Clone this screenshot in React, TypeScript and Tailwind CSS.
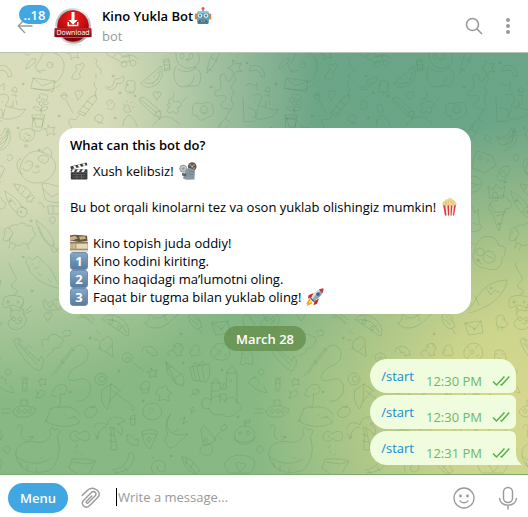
import React from "react";

type IconProps = { children: React.ReactNode; label: string; className?: string };

function Emoji({ children, label, className = "" }: IconProps) {
  return (
    <svg
      role="img"
      aria-label={label}
      viewBox="0 0 18 18"
      className={"inline-block h-[18px] w-[18px] shrink-0 " + className}
    >
      {children}
    </svg>
  );
}

function Robot() {
  return (
    <Emoji label="robot">
      <circle cx="9" cy="1.6" r="1.5" fill="#e2574c" />
      <rect x="8.2" y="2.5" width="1.6" height="2" fill="#7b9aa3" />
      <rect x="0.8" y="6.5" width="2.4" height="6" rx="1" fill="#e0803f" />
      <rect x="14.8" y="6.5" width="2.4" height="6" rx="1" fill="#e0803f" />
      <path d="M4 4h10l1.5 4.5-1 8H3.500l-1-8z" fill="#5fa6b3" />
      <path d="M4 4h10l.7 2H3.300z" fill="#8cc8d0" />
      <path d="M3.500 14h11l-.5 3H4z" fill="#4b7f8d" />
      <circle cx="6" cy="8.600" r="2.200" fill="#eefaff" />
      <circle cx="12" cy="8.600" r="2.200" fill="#eefaff" />
      <circle cx="6" cy="8.600" r="1.200" fill="#3583b3" />
      <circle cx="12" cy="8.600" r="1.200" fill="#3583b3" />
      <path d="M9 9.500l1 2H8z" fill="#d25045" />
      <rect x="5.500" y="12.800" width="7" height="2.200" rx=".5" fill="#344c59" />
      <path d="M7.200 13v2M9 13v2M10.800 13v2" stroke="#d8eef2" strokeWidth=".7" />
    </Emoji>
  );
}

function Clapper() {
  return (
    <Emoji label="clapper board">
      <path d="M.3 4.500L16.600.6l.8 2.700L1 7.300z" fill="#38393b" />
      <path d="M3 3.900l2.200-.5 1.400 2.400-2.300.6zM7.500 2.800l2.300-.5 1.400 2.400-2.300.5zM12.200 1.700l2.200-.5 1.500 2.300-2.300.6z" fill="#f3f3f3" />
      <rect x=".8" y="7.200" width="16.600" height="10.400" rx=".8" fill="#37383a" />
      <path d="M3 7.200h2.500L3.800 10H1.200zM8 7.200h2.500L8.800 10H6.200zM13 7.200h2.500L13.800 10h-2.600z" fill="#f3f3f3" />
      <path d="M1 10.400h16.200M2.500 12.600h13M2.500 15h13M7 12.600V17M11.500 12.600V17" stroke="#77797b" strokeWidth=".6" />
    </Emoji>
  );
}

function Projector() {
  return (
    <Emoji label="film projector">
      <circle cx="4.200" cy="6.700" r="3.500" fill="#d8dadb" stroke="#818384" strokeWidth=".8" />
      <path d="M4.200 3.500v6.400M1 6.700h6.400M2 4.400l4.500 4.600M6.500 4.400L2 9" stroke="#8d8f90" strokeWidth=".6" />
      <circle cx="13.200" cy="4.600" r="4.300" fill="#5c5653" />
      <circle cx="13.200" cy="4.600" r="1" fill="#c9bcae" />
      <circle cx="11.500" cy="3" r="1" fill="#a28f80" />
      <circle cx="15" cy="3" r="1" fill="#a28f80" />
      <circle cx="15" cy="6.300" r="1" fill="#a28f80" />
      <path d="M7 7.500l3-1.700 6 2.200-.5 9.500-8 .3L4 16.500l1-3.800z" fill="#8798a2" />
      <path d="M3 11l4.500.8-.3 2.700L3 13.400z" fill="#56626a" />
      <path d="M10 9l5 1M9.500 12l5 .5" stroke="#6c7d88" strokeWidth=".8" />
    </Emoji>
  );
}

function Popcorn() {
  return (
    <Emoji label="popcorn">
      <path d="M2 6.500h13l-2 11H4z" fill="#f7efec" />
      <path d="M2 6.500h2.200l1.300 11H4zM6.300 6.500h1.800v11H7zM9.800 6.500h1.700l-1 11H9.500zM13.100 6.500H15l-2 11h-1z" fill="#d93a3a" />
      <g fill="#f2d88d" stroke="#c6a052" strokeWidth=".3">
        <circle cx="3.500" cy="5.500" r="1.900" />
        <circle cx="6" cy="3.500" r="1.900" />
        <circle cx="9" cy="2.200" r="1.900" />
        <circle cx="11.500" cy="3.700" r="1.900" />
        <circle cx="13.500" cy="5.700" r="1.800" />
        <circle cx="6.500" cy="6" r="1.700" />
        <circle cx="10" cy="6" r="1.700" />
      </g>
    </Emoji>
  );
}

function Reel() {
  return (
    <Emoji label="film frames">
      <rect x="0" y="7.500" width="18" height="10" fill="#cfbf9b" />
      <path d="M0 8h18v1.500H0zM0 14.800h18v1H0z" fill="#8e7c5c" />
      <path d="M0 16.500h18v1H0z" fill="#ebe1c6" />
      <rect x="7" y="10" width="10" height="4.500" fill="#e6d8b7" />
      <path d="M0 1.500l4-.7 8 .5 5 .5.500 5.200L9 8 0 6.500z" fill="#65563e" />
      <path d="M0 3l5-1.200 3 2.400L3 6.300 0 6zM9 2.500l6-.3 1 2.500-6 1z" fill="#c8b183" />
      <path d="M2 9.500v5M5.500 9.500v5" stroke="#a8956d" strokeWidth=".7" />
    </Emoji>
  );
}

function Keycap({ digit }: { digit: string }) {
  return (
    <span className="flex h-[18px] w-[18px] shrink-0 items-center justify-center rounded-[3px] border border-[#6b8fb2] bg-linear-to-b from-[#85a7c7] to-[#587b9e] text-[13px] leading-none font-bold text-white">
      {digit}
    </span>
  );
}

function Rocket() {
  return (
    <Emoji label="rocket">
      <path d="M3.500 10.500L0 16l1.500-.4L.8 18l5.700-2.700z" fill="#f39a25" />
      <path d="M4.500 11.500L2 15.800l4-1.800z" fill="#ffe15a" />
      <path d="M7.500 5L2.500 7.300 2 10.500l3.500-.7zM13 10.500l-2 5.300-3.300 1.400L8.300 13z" fill="#c9302f" />
      <path d="M17.500.5c-5 .2-8.800 3-12.400 9.500l3 3C14.500 9.300 17.400 5.400 17.500.5z" fill="#98a8b4" />
      <path d="M17.500.5c-5 .2-8.800 3-12.400 9.500l1.200 1.200C9.500 6.500 13 3 17.500.5z" fill="#dbe3e9" />
      <path d="M17.500.5c-1.800.1-3.300.4-4.700 1.100l3.500 3.600c.8-1.500 1.100-3 1.200-4.700z" fill="#cb3835" />
      <circle cx="12" cy="6.200" r="1.600" fill="#2d5f93" stroke="#66798a" strokeWidth=".7" />
      <path d="M5 9.500l3.600 3.600-1.200.9-3.300-3.300z" fill="#58646f" />
    </Emoji>
  );
}

function Avatar() {
  return (
    <svg role="img" aria-label="Kino Yukla Bot" viewBox="0 0 40 40" className="h-10 w-10 shrink-0">
      <defs>
        <radialGradient id="red" cx=".5" cy=".2" r=".8">
          <stop offset="0" stopColor="#f0201c" />
          <stop offset=".55" stopColor="#c80b10" />
          <stop offset="1" stopColor="#780308" />
        </radialGradient>
        <linearGradient id="rim" x1="0" y1="0" x2="1" y2="1">
          <stop offset="0" stopColor="#9a9a9a" />
          <stop offset=".4" stopColor="#f0f0f0" />
          <stop offset="1" stopColor="#888" />
        </linearGradient>
        <linearGradient id="band" x1="0" y1="0" x2="0" y2="1">
          <stop offset="0" stopColor="#c0272b" />
          <stop offset="1" stopColor="#7f0a10" />
        </linearGradient>
      </defs>
      <ellipse cx="20" cy="38.800" rx="9" ry="1" fill="#ececec" />
      <circle cx="20" cy="20" r="17.800" fill="url(#rim)" />
      <circle cx="20" cy="20" r="15.500" fill="url(#red)" stroke="#8d1518" strokeWidth=".6" />
      <path d="M18.500 6h3v8h3.300L20 18.800 15.200 14h3.300z" fill="#fff" />
      <path d="M14.500 16v4.200h11V16h-1.500v2.700h-8V16z" fill="#fff" />
      <path d="M2 22l-1 8.500 2 1h34l2-1-1-8.500z" fill="#b5b0b0" />
      <rect x="1.500" y="22" width="37" height="9" rx="1" fill="url(#band)" />
      <text x="20" y="29" textAnchor="middle" fill="#fff" fontSize="7" fontFamily="Open Sans, sans-serif">
        Download
      </text>
    </svg>
  );
}

/* Line drawings of the wallpaper, on a tile 253 wide and 422 high. */
const upperDoodles: string[] = [
  "M27 15c2-4 5-7 9-6l-1 4c-4 1-5 5-9 6zM32 0l4-1M25 3c0 2 3 3 5 1",
  "M44 2l-1-5 4 3 5-1 2 4c9 2 12 11 9 19-1 4-4 9-9 11M44 2c-3 4-3 8-7 12-3 3-1 6 3 7l6-1M31 38l2-10 22 3-2 10zM33 28l9 8 13-5M33 38c8 3 22 3 28-4",
  "M50 12a3 3 0 1 0 .1 0M52 14v1M37 21l4 2",
  "M72-2l3 4 4-1-2 4 2 3-5-1-3 3v-5l-4-2 4-2z",
  "M72 27l5-8c-3-3 0-6 3-4 1-3 5-2 4 1l-5 8c3 3 0 6-3 5-2 2-5 0-4-2z",
  "M94 8c6 2-1 6 4 9s2 5 3 7M95 32c-3 4 3 5 1 9s1 4 0 6M96 28v-4",
  "M106 3c4 6 12 5 16 10l8-2-1-6M106 3l-4-6M113 7l5-5 6 5 5-1M124 11a3 3 0 1 0 .1 0M133 10a3 3 0 1 0 .1 0M121 8c5-5 12-4 17 1",
  "M106 36c4 4 8-1 8-5s6 0 9-5M106 38c6 5 11-1 11-5 4 2 8-2 7-6",
  "M128 35c-4-2 0-6 3-4 5-1 5 4 3 5 3 4 0 7-4 6-5 1-7-4-2-7M127 34l-2 1M130 42v2M133 42v2",
  "M141 33l20-17c4 9-1 19-10 21-4 1-9-1-10-4zM144 32c7 5 17-2 16-12M149 29v1M154 26v1M153 33v1M157 29v1M158 22v1",
  "M164 12l5-1 1 7-5 1zM164 12l-1-2 6-1v2M165 19l-1 2 6-1v-2M164 15h6",
  "M176 4c-3-3 1-8 4-5 4-4 12-4 15 0 4-3 7 2 3 5 4 7-1 13-7 14-9 2-16-6-15-14M182 3a2 3 0 1 0 .1 0M191 3a2 3 0 1 0 .1 0M186 9h3l-1 2zM176 16c-4 8-2 16 3 20 9 3 14-2 15-10M194 17c8 2 9 14 3 19h-10M178 19c6 4 13 3 18-1",
  "M217-2c-6 6-9 15-10 25 7-7 11-14 13-23M208 19l4 2M212 8l5 3",
  "M233 10l3 4 5-1-2 5 3 4-5-1-3 4-2-5-4-2 4-3z",
  "M250 17c3-3 10-2 12 2 3 3 2 5 3 7l-4 1c0-3-2-6-5-7l-6 1z",
  "M0 45c7-3 10 2 8 6l-3 5c8 2 11 2 15 4l6-1-6 7c-8 3-13 5-20 1M-7 36l3-3 5 3 3-3v7M2 52h1M5 59l-2 7M-10 48l1 24 11-1M-6 57l8 3 1 7",
  "M12 40c1-4 5-3 5 0v2h-3v-1h-2zM12 45h4v2M13 51v5h-2M16 50l1 5",
  "M40 48c-3-4 2-6 4-3 4-1 5 3 2 5 4 2 2 6-2 4-3 3-6 1-4-2-5 1-5-5 0-4M43 49a2 2 0 1 0 .1 0M42 56l-1 8M41 61c-6 0-8-4-8-4 3-1 7 0 8 4 0-4 4-5 7-4-1 3-3 4-6 4M32 65h13l-1 3H33zM34 68l2 9h6l2-9",
  "M64 43a3 3 0 1 0 .1 0M61 46l6-1M66 50l7 13",
  "M76 45c-3-4 2-6 3-3 2-3 6 0 3 3l-4 5z",
  "M91 47l4-2 2 4-13 17-6-3zM80 61l6 3M83 56l6 4M87 51l6 4M79 65c-4 10-9 0-10 6s4 4 3 8",
  "M109 56c-4-2-2-6 1-6s6 4 4 7-6 3-7 1M111 53h1",
  "M125 56c2-3 6 0 4 3 3 1 2 4-1 3-4 1-5-3-3-6M123 54l1 1M127 51v1M131 53l1-1M134 57h-1",
  "M140 48l4-1 16 14 1 6-6-1-15-14zM141 50l16 13M155 66l1-4 5-1",
  "M154 46c-3-3 2-6 3-3 2-3 6 0 3 3l-3 4z",
  "M170 54c-4-5 2-8 4-2 4-2 9 1 7 4l-4 2c4 4-1 8-4 3-4 5-8-1-3-4-4-1-4-4 0-3M173 48l1-5M183 51l4-4",
  "M193 60c-3-5 4-9 9-6 6-5 12 0 11 5 2 5-1 8-6 8-5 6-10 2-9-1-7 0-7-5-5-6M204 56a4 4 0 1 0 .1 0M202 59v1M206 59v1M202 62c1 1 3 1 4 0",
  "M221 25c7-4 3 4 7 6s2-6 6-5c3 0 1 7-2 9-2 3 1 5 2 8M221 25c-3 5 1 8 0 12-2 7-8 1-6 8 3 3 9-2 11 2 1 5-6 4-5 9 3 5 10 0 8 6-1 3-3 4-3 7M234 43c-3 3-4 8-1 10 2 3-3 5-2 8M224 70c-4 3-5 7-4 10M225 69l5 3",
  "M124 70l4-5c4 1 7 5 9 11M124 70l-1 6M153 76c4-8 11-11 19-8l8 6M160 70l-2-3",
  "M95 68a4 4 0 1 1 7 3c-1 2-4 2-4 0-3 1-4-2-3-3M98 73h5",
  "M33 68v3M33 69l-1 10c3 3 9 3 10 0l1-9z",
  "M48 75l3 3 4-1-2 4 2 4-5-2-3 3v-5l-3-2 4-1z",
  "M22 80c7-4 15 0 12 7s-13 5-14 0 0-6 2-7M25 84c2-2 3 0 3 2 2-2 4 0 2 2l-3 3-3-4M26 95a2 1 0 1 0 .1 0",
  "M0 98c5-2 8-10 7-17l3 1c2 10-3 17-12 19M8 78l2 3M-2 95l9-10",
  "M7 106c2-3 7-1 5 3-2 4-6 1-4-1",
  "M22 112c5-12 17-13 24-8 10 4 12 13 7 20-8 13-27 11-32 0-2-4-1-8 1-12M42 103c2-9 12-6 9 4M21 109c-7 0-4 16 2 15M25 113c4-5 10-1 7 4s-9 5-9 1M38 108c3-5 13-3 10 3-2 4-9 2-10-3M30 115h1M42 110h1M36 116h3l-1 2zM33 122c3 2 6 1 7-2",
  "M14 134c8 0 14 4 17 9l-4 5c-7-2-10-8-13-14M20 136l-2 4M25 139l-3 5M28 147c-3 4-1 6 1 4l3 1v-3l3-1-3-3-4 2",
  "M5 141c6 4 14 9 17 16l4 2M5 141c1 10 7 19 12 22M10 148l6 7M22 157a5 5 0 1 0 .1 0M21 161a1 1 0 1 0 .1 0",
  "M42 134l4-1 14 4M42 134l3 15c6 4 11 4 17 3M43 139l9 8 9-5",
  "M38 153c6-3 3 5 7 4M48 156h12v8H49zM53 156v7",
  "M9 178c-5-2-6 5-4 7-5 6 1 8 5 4l3-6-4-5c3-5 8-2 9-3 4-5 9 0 9 1 5-2 7 3 6 5 6 4 0 7-2 9 0 6-6 4-8 3-3 5-8 2-10 0-4 1-4-3-3-5M6 182h1M10 194l-1 4M15 196l-2 4M27 195l2 4",
  "M36 170c7 5 18 15 18 25l-3 2c-7-5-13-16-15-27M39 177c3 8 6 14 12 18M53 195l5 7M52 198c-2 4 4 6 5 2s5-1 3-5",
  "M50 171c-3-5 7-6 5 0-2 5-5 2-4 0",
  "M29 217c-4-2-4-8 0-10l3 3 6-4 4 5c7 4 12 13 14 19 3 6 5 6 6 9-14-3-22-7-28-13-3-3-6-6-5-9M32 214h1M39 212h1M34 219l5-2M48 229l3 3M38 223l4 3",
  "M14 244c6 0 3-5-1-6-4-2 1-5 3-8s-5-8-7-17M5 247c6-3 12-1 17 0 4 6 0 13-4 10-5-3-7-2-13 1-3-1-3-8 0-11M8 250v4M6 252h4M18 251a1 1 0 1 0 .1 0",
  "M44 250c-2 4 0 8 4 11l12-2c3-4-1-10-4-10l-7 4zM46 253l4 5 3-5 4 5",
  "M220 74c-3 4-5 9-9 12M227 76c-4 4-3 9-10 13l-6-3M217 79l7 4",
  "M232 86c4-2 8 3 4 5-5 2-7-4-3-3M232 88h1",
  "M244 87c6 2 12-1 14-9l3 2c2 7-4 15-11 15-6 0-5-7-6-8M246 89c7 2 12-2 14-8",
  "M225 101l14 5 4 9-11 8-13-5 2-11zM227 106a2 2 0 1 0 .1 0M234 112c-1-3 2-3 2-1",
  "M247 119c-4 7-4 12 2 12 6-2 5-7 9-12l-3-3c-3 0-5 1-8 3M250 121a3 3 0 1 0 .1 0",
  "M214 127c8-3 14 1 15 7-1 6-9 10-15 8M215 133l12 2M217 138l6-2",
  "M235 136l5 4 3-6 4 5 5-3-2 12h-13zM242 142a3 3 0 1 0 .1 0",
  "M241 160c-7-5-3-11 3-9 2-9 12-5 11 0 6 0 5 9-3 8l-6 22-8-20c-5-2-3-7 0-8M241 162h12M243 166l8-2",
  "M214 161l5-5 3 7 3-4 1 13 3 5c-2 5-10 5-15 4M216 169h2M220 173l6 2",
  "M223 195c3-9 15-12 21-4l2 5c8-2 8 8 3 12 1 11-9 14-17 10-11-1-14-10-11-16zM227 198a4 4 0 1 0 .1 0M236 201a6 6 0 1 0 .1 0M233 205l6 3M222 209l7 5M221 194l-4-2 1 6",
  "M216 260c11-18 17-29 38-30-2 17-21 29-38 33M233 238l5 7 4-5 5 3M222 246l4 9M217 253l-4 7",
  "M243 270c-1-4 5-7 8-3l1 4 3 2c-1 6-8 5-11 3zM249 269h1M245 277v3M249 277v3",
];

const lowerDoodles: string[] = [
  "M12 318c-5-6 3-10 7-7l5-2-1 5c5 3 4 11-2 14-6 4-14 0-13-6zM14 317a2 2 0 1 0 .1 0M20 317a2 2 0 1 0 .1 0M16 323c3 2 5 0 5-2M11 312l-1-5 3 3M20 309l2-5M26 311l6-6M24 314l7-3",
  "M45 317c-3-4 2-6 3-3 2-3 6 0 3 3l-3 4z",
  "M78 318c6-2 9 0 14 6M80 315c5 0 9 3 13 8M84 313c5 1 8 4 11 7M78 311l8-3",
  "M103 318c6-5 14-3 20 2 5 4 7 10 5 16l-3-1-22-15zM105 320c9-2 18 3 21 13M111 320a2 2 0 1 0 .1 0M119 326a2 2 0 1 0 .1 0M112 317l1 4M125 324l-3 3",
  "M145 323c5-2 5-7 3-12 4 7 11 9 15 5 6-3 10-3 13-8 6-1 6 6 1 7-5 6-14 14-23 13-4 0-7-2-9-5M153 319h1M164 315l3 6",
  "M189 317c-1-5 8-4 10 1l3 9-5 2c-6-3-8-7-8-12M191 319l7 6M199 329l3 5M193 316l7 6",
  "M212 323l16-2 2 12-14 2zM212 323l10 6 6-8M220 329c1-2 3 0 1 2",
  "M14 341c3-6 6 0 6 3l19 17 2-5c4 4 3 9-2 15-10-4-20-17-25-30M17 343l20 21M18 338l4 3M25 350l4-5 3 3",
  "M43 346c-4-5 2-9 5-6 0-6 8-8 11-3 5-1 5 5 2 7 0 5-5 3-8 5 0 5-6 5-6 8M63 333a4 3 0 1 1 4 3h-3",
  "M51 376l21-28M55 374l20-27c7-5 14 1 13 9-1 9-12 9-17 15-6 9-2 11 6 9 10-4 15 3 13 12-2 6-7 10-13 9M61 360l3 4M71 348l3 3",
  "M104 339c5-6 10 1 8 6l1 12-7-5-5-2c-3-6-1-10 3-11M106 351l5-5M96 331l4 3M95 340h3M98 349l2-1",
  "M142 352l1-4c8-4 14 0 14 7l-5 1c-1-4-2-4-5-3M146 349l2 3",
  "M170 356c-5-2-1-7 3-5 0-6 3-9 8-7 3 3 3 6-1 8l2 3-5 1-2-4M174 345l2 3M180 344l1 4",
  "M190 353c-1-3 1-4 2-2-2-8 9-8 7 0 3 4-1 6-4 4-3 2-5 0-5-2",
  "M211 351c2-9 15-11 18-2 3 8-3 12-9 11-8-1-10-4-9-9M219 350a2 2 0 1 0 .1 0M214 347l2 1M224 346l-1 2M224 356l2-1M215 357l1-2",
  "M240 363c4-6-1-13 6-13s8 8 6 15l-6-2-3 2zM243 354h1M249 354h1M245 358c1 1 2 1 3 0",
  "M127 363c-7-2-6-11 1-10 7 1 6 11-1 9-5-3 1-7 3-4s-2 4-2 1M133 363l11 8",
  "M151 368l2 3 4-1-2 4 2 3-4-1-3 2v-4l-3-2 4-1z",
  "M166 362l12 10c6 2 7 9 5 14l-6-2zM166 362l1 10 9 12M167 369l5-3M173 380c3-4 7-4 9-6",
  "M190 367l19-3c2 9 0 17-4 18l-12-2zM193 367l3 14M197 366l3 15M202 365l2 15M193 365l2-3 4 3 3-4 3 4",
  "M6 384c1-7-8-9-10-2M-5 383l11 8 8 2-3-7M2 377h1",
  "M23 380l4-1v10h-4zM22 378h6M23 383h4M22 391h5",
  "M41 378l2 2 3-1-1 3 1 3-3-1-3 2v-3l-2-2 3-1z",
  "M36 398c3-9 7-9 9-6 0 4-6 6-9 6M38 394l-2-4",
  "M52 394c1-6 8-12 13-9 5 6 0 10-5 9 1 8 0 11-2 14 9-3 19 0 22 7M51 395l6 2M60 389h1",
  "M101 373a6 6 0 1 0 .1 0M102 376a3 3 0 1 0 .1 0",
  "M102 390l9-6 10 7M102 390c-2 7 0 15 5 19l3-8 9-10M113 391l21 16c2 5-4 4-3 0M111 384l-1 17",
  "M140 388c0-6 3-2 4-6 5-3 7 3 5 6-3 2-6 2-9 0M141 389l1 4h6l1-5",
  "M157 390c2-4 6-1 7-4 4-1 3 3 4 5l4 2-4 3 1 5-5-2-5 2 1-5-4-2z",
  "M192 391c2-3 6-2 8 1l-4 3c-3 0-4-2-4-4M190 396l9-6",
  "M211 403l1-20 4-5 4 6v5h6l1-17 5-7 5 8v30M211 383h9M222 389l2-6 3 4M227 373h9M211 391h9M220 403v-9h6v9M231 379v3",
  "M202 405c-2-7 5-9 8-5 4-6 12-5 14 1 6-6 12-4 13 2 5 0 6 7 0 9-5 6-11 6-15 2-7 3-12-1-13-6-5 2-6 0-7-3",
  "M13 411c3-5 9-6 15-5l8 3c-1 5-7 9-14 8-5 0-9-2-9-6M19 409a2 2 0 1 0 .1 0M25 409a2 2 0 1 0 .1 0M30 409a2 2 0 1 0 .1 0M21 405v-5h6v5M2 409h8M2 413h8",
  "M51 408l-5 13c8 6 24 8 34 1l-7-6M47 420l-3 2M65 415h1M69 418l6-1M51 409l7-3",
  "M87 409c4-4 9-3 10 1 0 7-8 10-12 5-1-3 0-5 2-6M90 406l3 2 2-3",
  "M152 403c8 0 11 7 9 12-4 7-17 6-18-2-1-6 4-10 9-10M150 408v1M153 409v1M150 412v1",
  "M16 456c-2-12 11-16 20-14 11 2 13-5 15-7-3-6 1-10 4-5 5-3 6 3 2 7 4 10 3 24-7 33-12 5-31 3-34-14M17 457c9 7 22 9 33 2M20 462l2 5M27 466v5M36 468l1 4M41 458h1",
  "M17 428c1-5 6-4 5 0l-1 8 4 4M28 440c5 1 2-5 0-4",
  "M70 438c0-7 6-9 9-4 8-6 12-1 10 5-4 4-8 1-9-1-3 5-8 4-10 0M75 435l2 3",
  "M94 428c2-7 9-6 13-3 2-11 14-9 18-4l-8 3c7 2 6 9 4 11-3-4-6-7-11-8 3 9 0 13 1 23h6c0-7-3-14-4-22M107 427c-6 0-9 5-9 10l-4-3M109 434l5 2M110 441l5 1",
  "M127 435c4-1 6 1 8 5l3-1v7l-5-1c-5-1-7-5-6-10M130 438h1M131 416l4-1v10h-4zM130 419h5",
  "M142 432c5-3 11-3 16 0l-8 17c-6-3-7-11-8-17M143 435c6-2 10-2 14 0M149 437a2 2 0 1 0 .1 0M148 443h1",
  "M171 414c-7 10-4 19 7 21l10-1-11 10c-5 7-10 3-10 0-4-3-1-9 1-9-3-6-3-16 3-21M180 420l5-3-2 7 5-3M189 410l4-3-2 6 5-3M174 431c2 1 3 0 4-2",
  "M203 443l-2-12c1-5 3-7 5-3l10 12-10 6zM214 439l8-9M218 436l4 4M221 427l4-3 2 4-4 3zM200 450c1-6 10-8 12-4 2 7-2 10-6 9-5-1-7-3-6-5M206 438a2 2 0 1 0 .1 0",
  "M235 438c-2-8 4-12 10-12 7 0 11 6 9 12-2 8-16 9-19 0M233 438c4 6 18 6 23-1M245 421v5M245 421l5-1v3h-5M240 432a2 1 0 1 0 .1 0M248 431a2 2 0 1 0 .1 0",
  "M69 468l3-9h16l8 2-7 12M69 468l8 6M73 462l14 2 7-2M76 451l2 2M81 455l2-1M76 448l1-3",
  "M112 470c10-1 16-7 17-17 3-1 5 1 5 4-1 11-9 15-20 16M115 471l3 2M124 467l3 4",
  "M153 473c-5-10 3-14 9-12 5 3 5 10 0 11-5 0-6-5-3-7M154 459l-2-3",
  "M182 457c7 0 14 6 18 14l-4 3c-9-3-12-8-14-17M185 461l11 12M187 458l-1 6M193 463l-2 5",
  "M225 463c4-9 20-11 29-3 2 6-2 11-4 13h-21c-3-3-5-7-4-10M237 467c-3-5 3-6 4-3 2-3 6 0 3 4l-4 4z",
  "M4 451c-3-5 5-7 6-2 1 4-6 6-5 2M8 369a3 3 0 1 0 .1 0",
];

const dots: [number, number][] = [
  [23, 31], [59, 63], [113, 23], [120, 40], [135, 43], [211, 34], [247, 10], [18, 75], [115, 65],
  [10, 148], [39, 97], [31, 168], [23, 204], [32, 238], [252, 129], [246, 171], [225, 207],
  [238, 235], [90, 285], [181, 281], [119, 318], [183, 310], [222, 317], [70, 339], [143, 348],
  [238, 364], [97, 385], [171, 403], [32, 384],
];

function Wallpaper() {
  return (
    <div
      aria-hidden="true"
      className="absolute inset-0 -z-10 bg-[#88b884] bg-[radial-gradient(ellipse_60%_75%_at_0%_8%,#dbddbb_0%,#dbddbbf2_35%,#dbddbb00_100%),radial-gradient(ellipse_52%_68%_at_100%_84%,#d5d88d_0%,#d5d88de6_30%,#d5d88d00_100%),radial-gradient(ellipse_90%_75%_at_85%_4%,#6ba587_0%,#6ba587f2_45%,#6ba58700_100%)]"
    >
      <svg className="h-full w-full" fill="none">
        <defs>
          <g id="doodles">
            <g transform="translate(0 -3)">
              {upperDoodles.map((d) => (
                <path key={d} d={d} />
              ))}
            </g>
            <g transform="translate(0 -53)">
              {lowerDoodles.map((d) => (
                <path key={d} d={d} />
              ))}
            </g>
            {dots.map(([x, y]) => (
              <circle key={x + "-" + y} cx={x} cy={y} r="1" />
            ))}
          </g>
          <pattern id="wallpaper" width="253" height="422" patternUnits="userSpaceOnUse">
            <g stroke="#3f7a45" strokeOpacity=".25" strokeWidth=".8" strokeLinecap="round" strokeLinejoin="round">
              <use href="#doodles" />
              <use href="#doodles" x="-253" />
              <use href="#doodles" x="253" />
            </g>
          </pattern>
        </defs>
        <rect width="100%" height="100%" fill="url(#wallpaper)" />
      </svg>
    </div>
  );
}

function Checks() {
  return (
    <svg role="img" aria-label="Read" viewBox="0 0 18 12" className="h-3 w-[18px] shrink-0" fill="none" stroke="#55b24a" strokeWidth="1.500">
      <path d="M1 6.500l3.500 3.500L12.500 1.500M8.500 9l1.200 1L17.300 1.500" />
    </svg>
  );
}

function Message({ time, shape, tail }: { time: string; shape: string; tail?: boolean }) {
  return (
    <li className={"relative flex h-[34px] items-start bg-[#effdde] pr-[6px] pl-[11px] " + shape}>
      <a href="#start" className="pt-[8px] text-[#168acd]">/start</a>
      <time className="pt-[13px] pl-3 text-[#6cb866]">{time}</time>
      <span className="pt-4 pl-[10px]">
        <Checks />
      </span>
      {tail && (
        <svg aria-hidden="true" viewBox="0 0 6 12" className="absolute bottom-0 left-full h-3 w-[6px]">
          <path d="M0 0c0 5 2 9 6 12H0z" fill="#effdde" />
        </svg>
      )}
    </li>
  );
}

export default function App() {
  return (
    <div className="flex min-h-screen flex-col bg-white font-['Open_Sans','Noto_Sans',sans-serif] text-[13px] leading-[18px] text-black">
      <header className="flex h-[53px] items-center border-b border-[#b9c4ae] pr-4 pl-[17px]">
        <button type="button" aria-label="Back, 18 unread" className="relative h-10 w-[36px] shrink-0">
          <svg viewBox="0 0 16 16" className="absolute top-[12px] left-0 h-4 w-4" fill="none" stroke="#999" strokeWidth="1.300">
            <path d="M15.500 8H1.500M8 1L1.300 8 8 15" />
          </svg>
          <span className="absolute -top-px left-[2px] flex h-[19px] w-[31px] items-center justify-center rounded-full bg-[#40a7e3] text-[13px] font-semibold text-white">
            ..18
          </span>
        </button>
        <Avatar />
        <div className="flex min-w-0 flex-1 flex-col gap-[2px] pl-[9px]">
          <h1 className="flex items-center gap-px font-semibold">
            Kino Yukla Bot
            <Robot />
          </h1>
          <p className="text-[#999]">bot</p>
        </div>
        <button type="button" aria-label="Search" className="mr-[21px]">
          <svg viewBox="0 0 18 18" className="h-[18px] w-[18px]" fill="none" stroke="#999" strokeWidth="1.600">
            <circle cx="7.500" cy="7.500" r="6" />
            <path d="M11.800 11.800L17 17" />
          </svg>
        </button>
        <button type="button" aria-label="More" className="flex w-2 flex-col items-center gap-[2px]">
          <span className="h-1 w-1 rounded-full bg-[#999]" />
          <span className="h-1 w-1 rounded-full bg-[#999]" />
          <span className="h-1 w-1 rounded-full bg-[#999]" />
        </button>
      </header>

      <main className="relative isolate flex flex-1 flex-col items-center justify-end border-b border-[#7fa873] pb-[9px] pl-[2px]">
        <Wallpaper />
        <section className="w-fit rounded-2xl bg-white py-[8px] pr-3 pl-[11px]">
          <h2 className="pb-[8px] font-semibold">What can this bot do?</h2>
          <p className="flex gap-[5px]"><Clapper />Xush kelibsiz! <Projector /></p>
          <p className="flex gap-[5px] py-[18px]">
            Bu bot orqali kinolarni tez va oson yuklab olishingiz mumkin! <Popcorn />
          </p>
          <p className="flex gap-[5px]"><Reel />Kino topish juda oddiy!</p>
          <ol>
            <li className="flex gap-[5px]"><Keycap digit="1" />Kino kodini kiriting.</li>
            <li className="flex gap-[5px]"><Keycap digit="2" />Kino haqidagi ma’lumotni oling.</li>
            <li className="flex gap-[5px]"><Keycap digit="3" />Faqat bir tugma bilan yuklab oling! <Rocket /></li>
          </ol>
        </section>
        <p className="mt-3 mb-2 flex h-[25px] items-center rounded-full bg-[#618a46b3] px-3 font-semibold text-white">March 28</p>
        <ul className="flex flex-col items-end gap-[2px] self-end pr-3">
          <Message time="12:30 PM" shape="rounded-l-[17px] rounded-tr-2xl rounded-br-[6px]" />
          <Message time="12:30 PM" shape="rounded-l-[17px] rounded-r-[6px]" />
          <Message time="12:31 PM" shape="rounded-l-[17px] rounded-tr-[6px]" tail />
        </ul>
      </main>

      <form className="flex h-[42px] items-center pt-[3px] pr-[10px] pl-2" onSubmit={(e) => e.preventDefault()}>
        <button type="button" className="h-[30px] rounded-full bg-[#40a7e3] px-[12px] font-semibold text-white">Menu</button>
        <button type="button" aria-label="Attach a file" className="ml-3">
          <svg viewBox="0 0 22 22" className="h-[22px] w-[22px]" fill="none" stroke="#999" strokeWidth="1.400" strokeLinecap="round">
            <path d="M2.200 8.600L7.300 3.500C9.600 1.200 13 .8 15.300 2.200c3.800 1.200 5.300 5.400 2.400 8.300l-8.200 8.200c-4 4-9.500-1.500-5.800-5.500l7.800-7.800c2.600-2.600 6 .9 3.500 3.500l-6.800 6.800c-1.300 1.300-2.700-.3-1.600-1.500l5.200-5.200" />
          </svg>
        </button>
        <div className="ml-[14px] flex flex-1 items-center pb-[2px]">
          <span aria-hidden="true" className="h-[18px] w-px bg-black" />
          <input
            type="text"
            aria-label="Message"
            placeholder="Write a message..."
            className="min-w-0 flex-1 pl-px outline-none placeholder:text-[#999]"
          />
        </div>
        <button type="button" aria-label="Emoji">
          <svg viewBox="0 0 22 22" className="h-[22px] w-[22px]" fill="none" stroke="#999" strokeWidth="1.300">
            <circle cx="11" cy="11" r="10" />
            <circle cx="7.500" cy="9" r="1.400" fill="#999" stroke="none" />
            <circle cx="14.500" cy="9" r="1.400" fill="#999" stroke="none" />
            <path d="M6.500 13.500c2 3 7 3 9 0" />
          </svg>
        </button>
        <button type="button" aria-label="Record a voice message" className="ml-[23px]">
          <svg viewBox="0 0 20 24" className="h-6 w-5" fill="none" stroke="#999" strokeWidth="1.400">
            <rect x="5.500" y="1.500" width="9" height="15" rx="4.500" />
            <path d="M1.500 12c0 9.500 17 9.500 17 0M10 19v4.500" />
          </svg>
        </button>
      </form>
    </div>
  );
}
